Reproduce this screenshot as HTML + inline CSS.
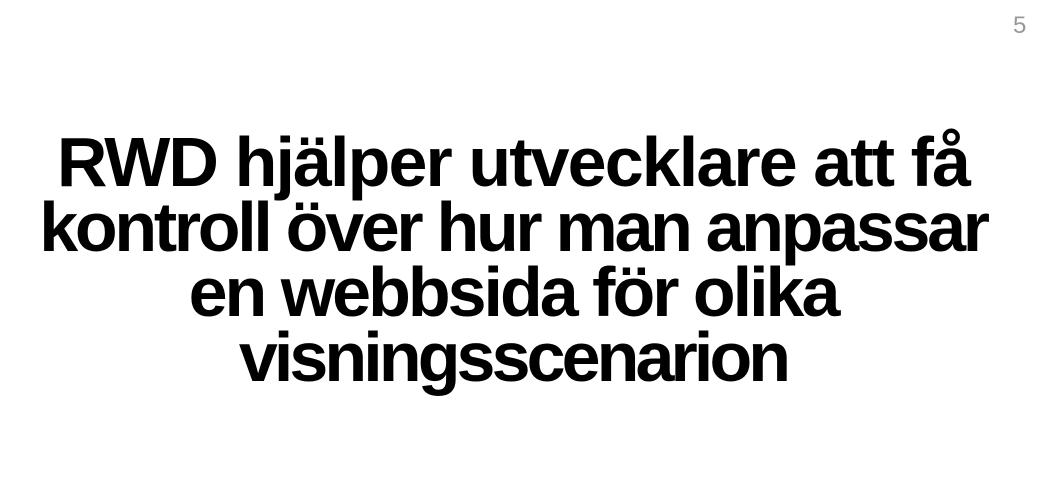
<!DOCTYPE html>
<html><head><meta charset="utf-8"><style>
html,body{margin:0;padding:0;background:#fff;width:1053px;height:497px;overflow:hidden}
.n{position:absolute;left:1013px;top:12px;font:24px "Liberation Sans",sans-serif;color:#999}
.l{position:absolute;left:0;width:1026px;text-align:center;font:bold 70px/1 "Liberation Sans",sans-serif;letter-spacing:-3.5px;color:#000;white-space:nowrap}
</style></head><body>
<div class="n">5</div>
<div class="l" style="top:127px;letter-spacing:-1.9px">RWD hjälper utvecklare att få</div>
<div class="l" style="top:192px;letter-spacing:-3.3px">kontroll över hur man anpassar</div>
<div class="l" style="top:257px;letter-spacing:-3px">en webbsida för olika</div>
<div class="l" style="top:322px;letter-spacing:-3.9px">visningsscenarion</div>
</body></html>
